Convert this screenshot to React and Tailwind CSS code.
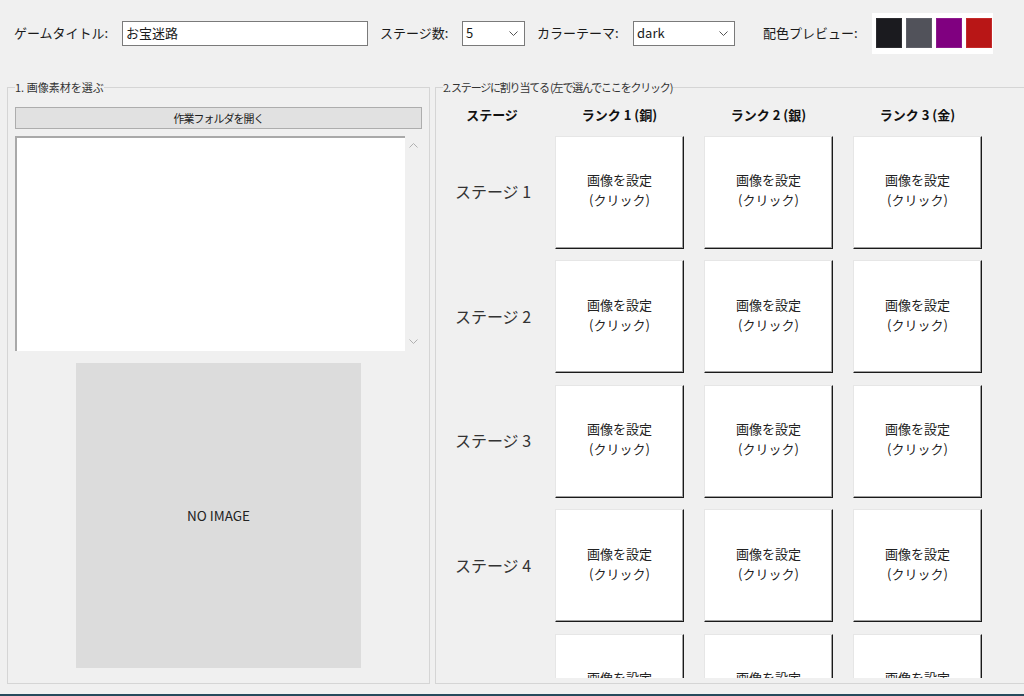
import React from "react";

const Chevron = ({ className = "" }) => (
  <svg width="9" height="5" viewBox="0 0 9 5" className={className}>
    <polyline points="0.5,0.5 4.5,4.5 8.5,0.5" fill="none" stroke="currentColor" strokeWidth="1" />
  </svg>
);

const ChevronUp = ({ className = "" }) => (
  <svg width="9" height="5" viewBox="0 0 9 5" className={className}>
    <polyline points="0.5,4.5 4.5,0.5 8.5,4.5" fill="none" stroke="currentColor" strokeWidth="1" />
  </svg>
);

const Tile = () => (
  <div className="h-[113px] w-[129px] bg-white border-t border-l border-t-[#e6e6e6] border-l-[#e6e6e6] border-r border-b border-r-[#1a1a1a] border-b-[#1a1a1a] shadow-[inset_-1px_-1px_0_#a0a0a0] flex flex-col items-center justify-center pb-[4px] text-[13px] leading-[20px] text-[#222]">
    <span>画像を設定</span>
    <span>(クリック)</span>
  </div>
);

export default function App() {
  const stages = [1, 2, 3, 4, 5];
  return (
    <div className="w-[1024px] h-[696px] overflow-hidden bg-[#f0f0f0] flex flex-col font-['Noto_Sans_CJK_JP','Noto_Sans',sans-serif] text-[#1a1a1a]">
      {/* Top bar */}
      <div className="mt-[13px] h-[40px] flex items-center pl-[14px] text-[13px] leading-[18px]">
        <span className="w-[108px]">ゲームタイトル:</span>
        <div className="w-[246px] h-[25px] bg-white border border-[#7a7a7a] flex items-center pl-[3px]">お宝迷路</div>
        <span className="ml-[12px] w-[82px]">ステージ数:</span>
        <div className="w-[63px] h-[25px] bg-white border border-[#7a7a7a] flex items-center justify-between pl-[3px] pr-[6px]">
          <span>5</span>
          <Chevron className="text-[#555]" />
        </div>
        <span className="ml-[12px] w-[96px]">カラーテーマ:</span>
        <div className="w-[102px] h-[25px] bg-white border border-[#7a7a7a] flex items-center justify-between pl-[3px] pr-[6px]">
          <span>dark</span>
          <Chevron className="text-[#555]" />
        </div>
        <span className="ml-[28px] w-[109px]">配色プレビュー:</span>
        <div className="w-[121px] h-[41px] bg-white flex items-center gap-[4px] pl-[4px]">
          <div className="w-[26px] h-[30px] bg-[#1b1b1f] border border-[#2c2c30]" />
          <div className="w-[26px] h-[30px] bg-[#51525a] border border-[#606069]" />
          <div className="w-[26px] h-[30px] bg-[#800080] border border-[#8c1a8c]" />
          <div className="w-[26px] h-[30px] bg-[#b81616] border border-[#c42a2a]" />
        </div>
      </div>

      {/* Main */}
      <div className="mt-[26px] flex pl-[7px]">
        <fieldset className="w-[423px] border border-[#d5d5d5] px-[7px] pb-[5px] shrink-0">
          <legend className="text-[11px] leading-[16px] text-[#333]">1. 画像素材を選ぶ</legend>
          <div className="h-[583px] overflow-hidden pt-[12px] flex flex-col">
            <div className="h-[22px] w-[407px] bg-[#e1e1e1] border border-[#adadad] flex items-center justify-center text-[11px] tracking-[-1px] text-[#222]">
              作業フォルダを開く
            </div>
            <div className="mt-[7px] h-[215px] w-[407px] flex">
              <div className="w-[390px] h-full bg-white border-t-2 border-l-2 border-[#a9a9a9]" />
              <div className="flex-1 flex flex-col items-center justify-between py-[7px] text-[#b0b0b0]">
                <ChevronUp />
                <Chevron />
              </div>
            </div>
            <div className="mt-[12px] w-[407px] flex justify-center">
              <div className="w-[285px] h-[305px] bg-[#dcdcdc] flex items-center justify-center text-[13.5px] text-[#222]">
                NO IMAGE
              </div>
            </div>
          </div>
        </fieldset>

        <fieldset className="ml-[5px] w-[620px] shrink-0 border border-[#d5d5d5] px-[7px] pb-[5px]">
          <legend className="text-[11px] leading-[16px] tracking-[-1.2px] text-[#333]">2. ステージに割り当てる (左で選んでここをクリック)</legend>
          <div className="h-[583px] overflow-hidden pt-[11px]">
            <div className="grid grid-cols-[92px_129px_129px_129px] gap-x-[20px] gap-y-[11.5px] items-center">
              <div className="h-[18px] pl-[6px] text-center text-[13px] leading-[18px] font-bold text-[#111]">ステージ</div>
              <div className="h-[18px] text-center text-[13px] leading-[18px] font-bold text-[#111]">ランク 1 (銅)</div>
              <div className="h-[18px] text-center text-[13px] leading-[18px] font-bold text-[#111]">ランク 2 (銀)</div>
              <div className="h-[18px] text-center text-[13px] leading-[18px] font-bold text-[#111]">ランク 3 (金)</div>
              {stages.map((s) => (
                <React.Fragment key={s}>
                  <div className="pl-[8px] pb-[2px] text-center text-[16px] leading-[20px] text-[#333]">ステージ {s}</div>
                  <Tile />
                  <Tile />
                  <Tile />
                </React.Fragment>
              ))}
            </div>
          </div>
        </fieldset>
      </div>

      <div className="flex-1" />
      <div className="h-[2px] bg-[#264a5c]" />
    </div>
  );
}
